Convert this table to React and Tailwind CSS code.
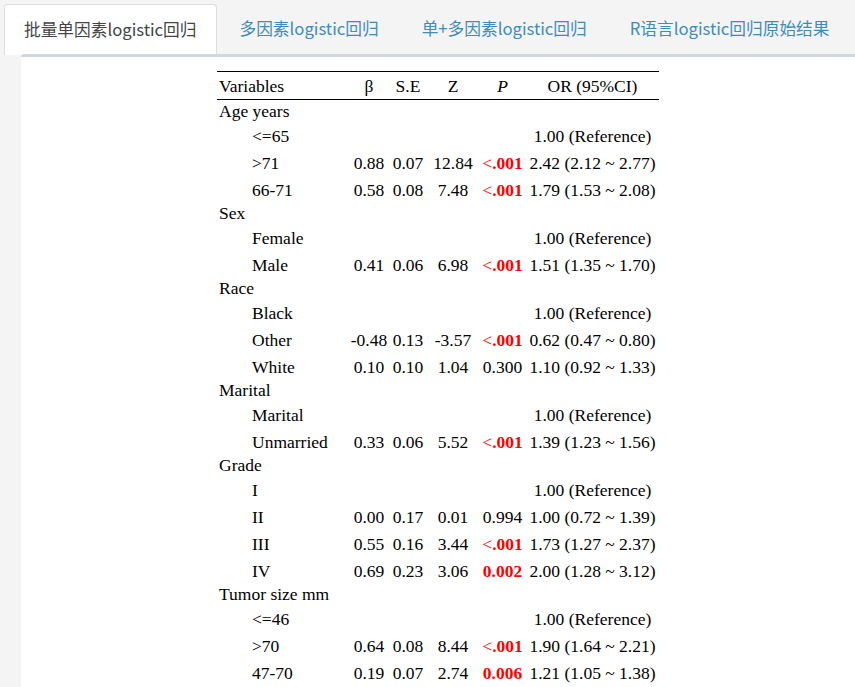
import React from "react";

const tabs = [
  "批量单因素logistic回归",
  "多因素logistic回归",
  "单+多因素logistic回归",
  "R语言logistic回归原始结果",
];

const groups = [
  {
    name: "Age years",
    rows: [
      ["<=65"],
      [">71", "0.88", "0.07", "12.84", "<.001", "2.42 (2.12 ~ 2.77)"],
      ["66-71", "0.58", "0.08", "7.48", "<.001", "1.79 (1.53 ~ 2.08)"],
    ],
  },
  {
    name: "Sex",
    rows: [
      ["Female"],
      ["Male", "0.41", "0.06", "6.98", "<.001", "1.51 (1.35 ~ 1.70)"],
    ],
  },
  {
    name: "Race",
    rows: [
      ["Black"],
      ["Other", "-0.48", "0.13", "-3.57", "<.001", "0.62 (0.47 ~ 0.80)"],
      ["White", "0.10", "0.10", "1.04", "0.300", "1.10 (0.92 ~ 1.33)"],
    ],
  },
  {
    name: "Marital",
    rows: [
      ["Marital"],
      ["Unmarried", "0.33", "0.06", "5.52", "<.001", "1.39 (1.23 ~ 1.56)"],
    ],
  },
  {
    name: "Grade",
    rows: [
      ["I"],
      ["II", "0.00", "0.17", "0.01", "0.994", "1.00 (0.72 ~ 1.39)"],
      ["III", "0.55", "0.16", "3.44", "<.001", "1.73 (1.27 ~ 2.37)"],
      ["IV", "0.69", "0.23", "3.06", "0.002", "2.00 (1.28 ~ 3.12)"],
    ],
  },
  {
    name: "Tumor size mm",
    rows: [
      ["<=46"],
      [">70", "0.64", "0.08", "8.44", "<.001", "1.90 (1.64 ~ 2.21)"],
      ["47-70", "0.19", "0.07", "2.74", "0.006", "1.21 (1.05 ~ 1.38)"],
    ],
  },
];

const cols = "grid grid-cols-[132px_40px_38px_52px_47px_133px]";

function PCell({ v }) {
  if (v === "<.001") {
    return (
      <span className="text-[#ff0000]">
        &lt;<span className="font-bold">.001</span>
      </span>
    );
  }
  if (v === "0.002" || v === "0.006") {
    return <span className="text-[#ff0000] font-bold">{v}</span>;
  }
  return <span>{v}</span>;
}

function SubRow({ r }) {
  const isRef = r.length === 1;
  return (
    <div className={`${cols} h-[27px] pt-[6px] leading-[19px]`}>
      <div className="pl-[35px] whitespace-nowrap">{r[0]}</div>
      {isRef ? (
        <>
          <div />
          <div />
          <div />
          <div />
          <div className="text-center whitespace-nowrap">1.00 (Reference)</div>
        </>
      ) : (
        <>
          <div className="text-center">{r[1]}</div>
          <div className="text-center">{r[2]}</div>
          <div className="text-center">{r[3]}</div>
          <div className="text-center whitespace-nowrap">
            <PCell v={r[4]} />
          </div>
          <div className="text-center whitespace-nowrap">{r[5]}</div>
        </>
      )}
    </div>
  );
}

export default function App() {
  return (
    <div className="min-h-[687px] h-[687px] overflow-hidden bg-[#f4f4f4]">
      <div
        className="flex pl-[4px] pt-[4px] h-[54px] text-[16.7px]"
        style={{ fontFamily: '"Noto Sans CJK SC", "Noto Sans", sans-serif' }}
      >
        {tabs.map((t, i) =>
          i === 0 ? (
            <div
              key={t}
              className="h-[51px] px-[19px] flex items-center bg-white border border-b-0 border-[#dddddd] rounded-t-[4px] text-[#444444] mr-[2px] whitespace-nowrap"
            >
              {t}
            </div>
          ) : (
            <div
              key={t}
              className="h-[50px] px-[21px] flex items-center text-[#3c8dbc] mr-[1px] whitespace-nowrap"
            >
              {t}
            </div>
          )
        )}
      </div>
      <div className="relative ml-[21px] h-[640px] bg-white border-t-[3px] border-[#d2d6de] rounded-tl-[3px]">
        <div
          className="mx-auto w-[442px] mt-[14px] text-[17.5px] text-black"
          style={{ fontFamily: '"Liberation Serif", "Times New Roman", serif' }}
        >
          <div className={`${cols} border-t border-b border-black h-[29px] items-center leading-[19px] pt-[2px]`}>
            <div className="pl-[2px]">Variables</div>
            <div className="text-center">β</div>
            <div className="text-center">S.E</div>
            <div className="text-center">Z</div>
            <div className="text-center italic">P</div>
            <div className="text-center">OR (95%CI)</div>
          </div>
          {groups.map((g) => (
            <div key={g.name}>
              <div className="h-[21px] pt-[2px] leading-[19px] pl-[2px] whitespace-nowrap">
                {g.name}
              </div>
              {g.rows.map((r) => (
                <SubRow key={g.name + r[0]} r={r} />
              ))}
            </div>
          ))}
        </div>
      </div>
    </div>
  );
}
